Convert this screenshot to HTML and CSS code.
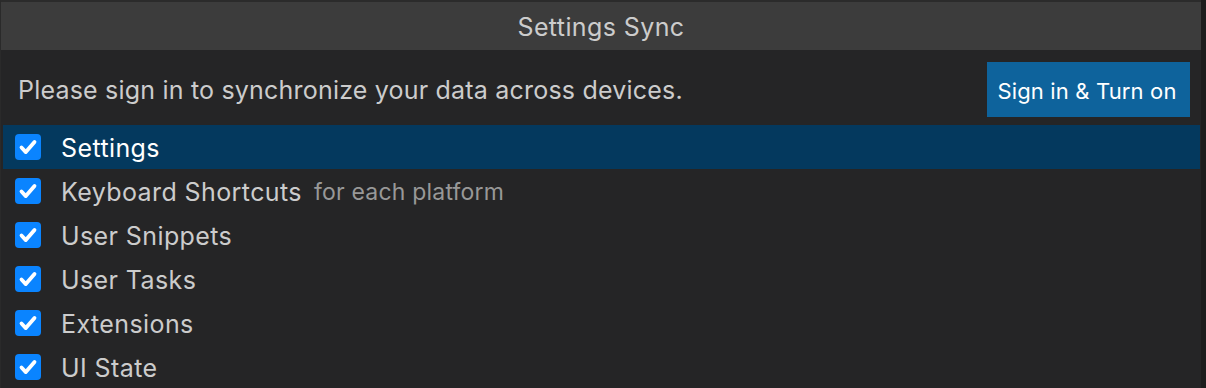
FILE: index.html
```html
<!DOCTYPE html>
<html>
<head>
<meta charset="utf-8">
<link rel="stylesheet" href="styles.css">
</head>
<body>
<div class="shell">
  <div class="panel">
    <div class="title">Settings Sync</div>
    <div class="message">
      <span class="message-text">Please sign in to synchronize your data across devices.</span>
      <button class="btn">Sign in &amp; Turn on</button>
    </div>
    <ul class="list">
      <li class="row selected"><span class="check"><svg viewBox="0 0 26 26" width="26" height="26"><path d="M6.5 13.5l4.3 4.6 8.7-10.2" fill="none" stroke="#fff" stroke-width="3.8" stroke-linecap="round" stroke-linejoin="round"/></svg></span><span class="label">Settings</span></li>
      <li class="row"><span class="check"><svg viewBox="0 0 26 26" width="26" height="26"><path d="M6.5 13.5l4.3 4.6 8.7-10.2" fill="none" stroke="#fff" stroke-width="3.8" stroke-linecap="round" stroke-linejoin="round"/></svg></span><span class="label">Keyboard Shortcuts</span><span class="desc">for each platform</span></li>
      <li class="row"><span class="check"><svg viewBox="0 0 26 26" width="26" height="26"><path d="M6.5 13.5l4.3 4.6 8.7-10.2" fill="none" stroke="#fff" stroke-width="3.8" stroke-linecap="round" stroke-linejoin="round"/></svg></span><span class="label">User Snippets</span></li>
      <li class="row"><span class="check"><svg viewBox="0 0 26 26" width="26" height="26"><path d="M6.5 13.5l4.3 4.6 8.7-10.2" fill="none" stroke="#fff" stroke-width="3.8" stroke-linecap="round" stroke-linejoin="round"/></svg></span><span class="label">User Tasks</span></li>
      <li class="row"><span class="check"><svg viewBox="0 0 26 26" width="26" height="26"><path d="M6.5 13.5l4.3 4.6 8.7-10.2" fill="none" stroke="#fff" stroke-width="3.8" stroke-linecap="round" stroke-linejoin="round"/></svg></span><span class="label">Extensions</span></li>
      <li class="row"><span class="check"><svg viewBox="0 0 26 26" width="26" height="26"><path d="M6.5 13.5l4.3 4.6 8.7-10.2" fill="none" stroke="#fff" stroke-width="3.8" stroke-linecap="round" stroke-linejoin="round"/></svg></span><span class="label">UI State</span></li>
    </ul>
  </div>
</div>
</body>
</html>
```
FILE: styles.css
```css
html, body {
  margin: 0;
  padding: 0;
  background: #1d1d1d;
  height: 388px;
  overflow: hidden;
}
body {
  font-family: Inter, "Noto Sans", sans-serif;
  -webkit-font-smoothing: antialiased;
}
.shell {
  display: flex;
  width: 1206px;
  height: 388px;
}
.panel {
  width: 1200px;
  border-left: 1px solid #2a2a2a;
  border-top: 2px solid #2b2b2b;
  background: #252526;
  display: flex;
  flex-direction: column;
}
.title {
  flex: none;
  height: 48px;
  padding-top: 2px;
  box-sizing: border-box;
  background: #3c3c3c;
  color: #cccccc;
  font-size: 25px;
  letter-spacing: 0.4px;
  display: flex;
  align-items: center;
  justify-content: center;
}
.message {
  flex: none;
  height: 75px;
  box-sizing: border-box;
  display: flex;
  align-items: flex-start;
  justify-content: space-between;
  padding: 12px 11px 8px 17px;
}
.message-text {
  color: #cccccc;
  font-size: 25px;
  letter-spacing: 0.2px;
  line-height: 57px;
}
.btn {
  width: 203px;
  height: 55px;
  border: none;
  background: #0e639c;
  color: #ffffff;
  font-family: inherit;
  font-size: 22px;
  letter-spacing: 0.15px;
  padding: 2px 3px 0 0;
}
.list {
  flex: none;
  list-style: none;
  margin: 0 1px 0 2px;
  padding: 0;
}
.row {
  height: 44px;
  display: flex;
  align-items: center;
  padding-left: 12px;
  color: #cccccc;
  font-size: 25px;
  letter-spacing: 0.4px;
}
.row.selected {
  background: #04395e;
  color: #ffffff;
}
.check {
  width: 26px;
  height: 26px;
  border-radius: 4px;
  background: #0a84ff;
  display: flex;
  flex: none;
}
.label {
  margin-left: 20px;
  padding-top: 2px;
}
.desc {
  margin-left: 12px;
  padding-top: 2px;
  color: #989898;
  font-size: 23px;
  letter-spacing: 0.2px;
}
```
